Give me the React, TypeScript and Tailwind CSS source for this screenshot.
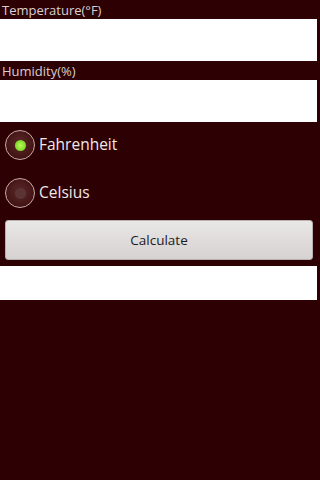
import React, { useState } from "react";

function Radio({ checked }: { checked: boolean }) {
  return (
    <div className="flex h-[30px] w-[30px] items-center justify-center rounded-full border-[1.5px] border-[#c9a9a6] bg-[radial-gradient(circle_at_50%_45%,#5a2a2a,#3a0a0a)]">
      {checked ? (
        <div className="h-[11px] w-[11px] rounded-full bg-[radial-gradient(circle,#b8ff50,#66c31c)]" />
      ) : (
        <div className="h-[11px] w-[11px] rounded-full bg-[#5c3434]" />
      )}
    </div>
  );
}

export default function App() {
  const [unit, setUnit] = useState<"F" | "C">("F");

  return (
    <div className="flex h-[480px] w-[320px] flex-col bg-[#2d0003] font-['Open_Sans','DejaVu_Sans',sans-serif]">
      <div className="pl-[2px] pt-[1px] text-[13px] leading-[18px] text-[#d8d0d0]">Temperature(°F)</div>
      <div className="mr-[3px] h-[42px] bg-white" />
      <div className="mt-[2px] pl-[2px] text-[13px] leading-[17px] text-[#d8d0d0]">Humidity(%)</div>
      <div className="mr-[3px] h-[42px] bg-white" />

      <button
        className="mt-[8px] flex items-center gap-[4px] pl-[5px] text-left"
        onClick={() => setUnit("F")}
      >
        <Radio checked={unit === "F"} />
        <span className="text-[15.5px] text-[#f1e8e8]">Fahrenheit</span>
      </button>
      <button
        className="mt-[18px] flex items-center gap-[4px] pl-[5px] text-left"
        onClick={() => setUnit("C")}
      >
        <Radio checked={unit === "C"} />
        <span className="text-[15.5px] text-[#f1e8e8]">Celsius</span>
      </button>

      <button className="mx-[5px] mr-[7px] mt-[12px] h-[40px] rounded-[3px] border border-[#b9b0b0] bg-[linear-gradient(#e9e6e6,#d6d2d2)] text-[13.5px] text-[#1c1c1c]">
        Calculate
      </button>
      <div className="mr-[3px] mt-[6px] h-[34px] bg-white" />
    </div>
  );
}
